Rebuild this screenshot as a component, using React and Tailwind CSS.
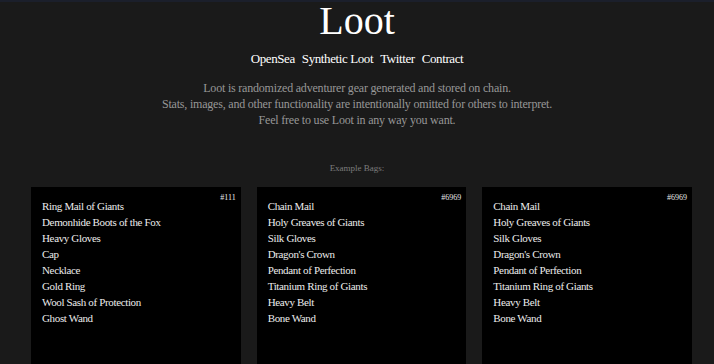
import React from "react";

const bags = [
    {
        id: "#111",
        items: [
            "Ring Mail of Giants",
            "Demonhide Boots of the Fox",
            "Heavy Gloves",
            "Cap",
            "Necklace",
            "Gold Ring",
            "Wool Sash of Protection",
            "Ghost Wand",
        ],
    },
    {
        id: "#6969",
        items: [
            "Chain Mail",
            "Holy Greaves of Giants",
            "Silk Gloves",
            "Dragon's Crown",
            "Pendant of Perfection",
            "Titanium Ring of Giants",
            "Heavy Belt",
            "Bone Wand",
        ],
    },
    {
        id: "#6969",
        items: [
            "Chain Mail",
            "Holy Greaves of Giants",
            "Silk Gloves",
            "Dragon's Crown",
            "Pendant of Perfection",
            "Titanium Ring of Giants",
            "Heavy Belt",
            "Bone Wand",
        ],
    },
];

function App() {
    return (
        <div className="min-h-screen bg-[#1a1a1a] border-t-2 border-[#1b1f2b] font-['Liberation_Serif',serif] overflow-hidden">
            <h1 className="text-center text-white text-[40px] leading-[36px] pt-[1px]">
                Loot
            </h1>

            <div className="flex justify-center gap-[7px] mt-[12px] text-[13px] leading-[16px] text-white tracking-[-0.4px]">
                <a href="#">OpenSea</a>
                <a href="#">Synthetic Loot</a>
                <a href="#">Twitter</a>
                <a href="#">Contract</a>
            </div>

            <div className="mt-[13px] text-center text-[12px] leading-[16px] text-[#979797] tracking-[-0.2px]">
                <p>Loot is randomized adventurer gear generated and stored on chain.</p>
                <p>Stats, images, and other functionality are intentionally omitted for others to interpret.</p>
                <p>Feel free to use Loot in any way you want.</p>
            </div>

            <p className="mt-[33px] text-center text-[9px] leading-[14px] text-[#7c7c7c]">
                Example Bags:
            </p>

            <div className="grid grid-cols-3 gap-4 mt-[12px] pl-[31px] pr-[22px]">
                {bags.map((bag, i) => (
                    <div key={i} className="relative bg-black h-[200px] pt-[11px] px-[11px]">
                        <span className="absolute top-[6px] right-[5px] text-[8px] leading-[10px] text-[#e8e8e8]">
                            {bag.id}
                        </span>
                        <ul className="text-[11px] leading-[16px] text-[#ececec] tracking-[-0.35px]">
                            {bag.items.map((item, j) => (
                                <li key={j}>{item}</li>
                            ))}
                        </ul>
                    </div>
                ))}
            </div>
        </div>
    );
}

export default App;
